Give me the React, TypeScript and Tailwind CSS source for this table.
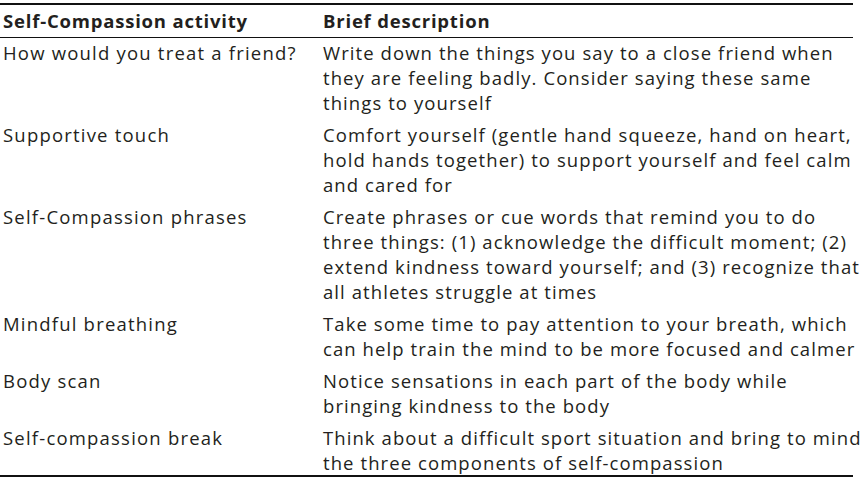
import React from "react";

type Row = { activity: string; lines: string[] };

const rows: Row[] = [
  {
    activity: "How would you treat a friend?",
    lines: [
      "Write down the things you say to a close friend when",
      "they are feeling badly. Consider saying these same",
      "things to yourself",
    ],
  },
  {
    activity: "Supportive touch",
    lines: [
      "Comfort yourself (gentle hand squeeze, hand on heart,",
      "hold hands together) to support yourself and feel calm",
      "and cared for",
    ],
  },
  {
    activity: "Self-Compassion phrases",
    lines: [
      "Create phrases or cue words that remind you to do",
      "three things: (1) acknowledge the difficult moment; (2)",
      "extend kindness toward yourself; and (3) recognize that",
      "all athletes struggle at times",
    ],
  },
  {
    activity: "Mindful breathing",
    lines: [
      "Take some time to pay attention to your breath, which",
      "can help train the mind to be more focused and calmer",
    ],
  },
  {
    activity: "Body scan",
    lines: [
      "Notice sensations in each part of the body while",
      "bringing kindness to the body",
    ],
  },
  {
    activity: "Self-compassion break",
    lines: [
      "Think about a difficult sport situation and bring to mind",
      "the three components of self-compassion",
    ],
  },
];

export default function App() {
  return (
    <div className="w-[864px] h-[483px] bg-white overflow-hidden pt-[3px] text-[#231f20] font-['Open_Sans',sans-serif] text-[18.5px] leading-[25px] tracking-[1.2px]">
      <div className="w-[853px] border-t-2 border-b-2 border-[#111]">
        <div className="grid grid-cols-[323px_1fr] border-b border-[#111] font-bold tracking-[0.8px] pt-[3px] pb-[4px]">
          <div className="pl-[3px] whitespace-nowrap">Self-Compassion activity</div>
          <div className="whitespace-nowrap">Brief description</div>
        </div>
        {rows.map((r, i) => (
          <div
            key={i}
            className={`grid grid-cols-[323px_1fr] ${i === 0 ? "pt-[2px]" : "pt-[3px]"} ${i === rows.length - 1 ? "pb-[0px]" : "pb-[4px]"}`}
          >
            <div className="pl-[3px] whitespace-nowrap">{r.activity}</div>
            <div className="whitespace-nowrap tracking-[1.08px]">
              {r.lines.map((l, j) => (
                <div key={j}>{l}</div>
              ))}
            </div>
          </div>
        ))}
      </div>
    </div>
  );
}
